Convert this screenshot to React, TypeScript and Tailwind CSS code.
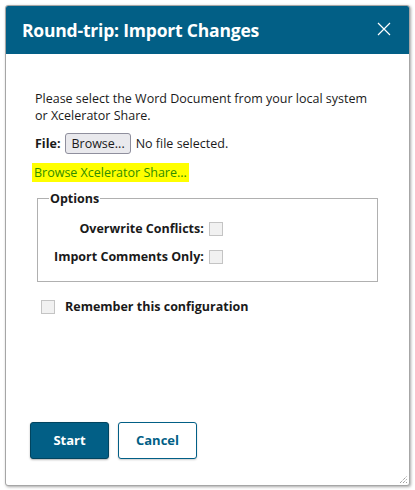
import React from "react";

export default function App() {
  return (
    <div className="w-[415px] h-[490px] bg-white pt-[5px] pl-[5px]" style={{ fontFamily: '"Open Sans", "Noto Sans", sans-serif' }}>
      <div className="relative w-[405px] h-[481px] rounded-[3px] border border-[#a6a6a6] shadow-[1px_1px_3px_rgba(0,0,0,0.35)] bg-white flex flex-col overflow-hidden">
        <div className="h-[48px] bg-[#025f86] flex items-center justify-between pl-[16px] pr-[17px]">
          <div className="text-white font-bold text-[17.5px] tracking-[-0.2px]">Round-trip: Import Changes</div>
          <svg width="16" height="16" viewBox="0 0 16 16" className="mt-[-2px]">
            <path d="M2 2 L14 14 M14 2 L2 14" stroke="white" strokeWidth="1.2" />
          </svg>
        </div>
        <div className="flex flex-col pl-[29px] pr-[20px] text-[#1a1a1a] text-[12.5px] leading-[17px]">
          <div className="mt-[36px] w-[345px]">
            Please select the Word Document from your local system or Xcelerator Share.
          </div>
          <div className="mt-[9px] flex items-center h-[21px]">
            <span className="font-bold">File:</span>
            <span className="ml-[5px] h-[21px] px-[5px] flex items-center rounded-[3px] border border-[#8f8f9d] bg-[#e9e9ed]">Browse...</span>
            <span className="ml-[5px]">No file selected.</span>
          </div>
          <div className="mt-[9px] self-start bg-[#ffff00] px-[2px] ml-[-3px] leading-[19px] text-[#2f8d00]">
            Browse Xcelerator Share...
          </div>
          <fieldset className="mt-[8px] ml-[2px] w-[341px] h-[92px] border border-[#b0b0b0] pl-[16px] pr-[12px] pt-0">
            <legend className="font-bold px-[1px] ml-[-5px] leading-[17px]">Options</legend>
            <div className="grid grid-cols-[auto_auto] justify-start gap-x-[5px] gap-y-[11px] mt-[13px] items-center">
              <span className="font-bold text-right">Overwrite Conflicts:</span>
              <span className="w-[14px] h-[14px] border border-[#c4c4c4] bg-[#f1f1f1]" />
              <span className="font-bold text-right">Import Comments Only:</span>
              <span className="w-[14px] h-[14px] border border-[#c4c4c4] bg-[#f1f1f1]" />
            </div>
          </fieldset>
          <div className="mt-[16px] ml-[6px] flex items-center">
            <span className="w-[14px] h-[14px] border border-[#c4c4c4] bg-[#f1f1f1]" />
            <span className="ml-[10px] font-bold">Remember this configuration</span>
          </div>
        </div>
        <div className="mt-auto mb-[26px] pl-[24px] flex gap-[9px]">
          <button className="w-[79px] h-[37px] rounded-[3px] bg-[#025f86] border border-[#01445f] text-white font-bold text-[13px] shadow-[0_1px_2px_rgba(0,0,0,0.3)]">Start</button>
          <button className="w-[79px] h-[37px] rounded-[3px] bg-white border border-[#025f86] text-[#025f86] font-bold text-[13px] shadow-[0_1px_2px_rgba(0,0,0,0.2)]">Cancel</button>
        </div>
        <svg width="10" height="10" viewBox="0 0 10 10" className="absolute right-[1px] bottom-[1px]">
          <path d="M2 9 L9 2 M5 9 L9 5 M8 9 L9 8" stroke="#777" strokeWidth="1" strokeDasharray="1 1" />
        </svg>
      </div>
    </div>
  );
}
